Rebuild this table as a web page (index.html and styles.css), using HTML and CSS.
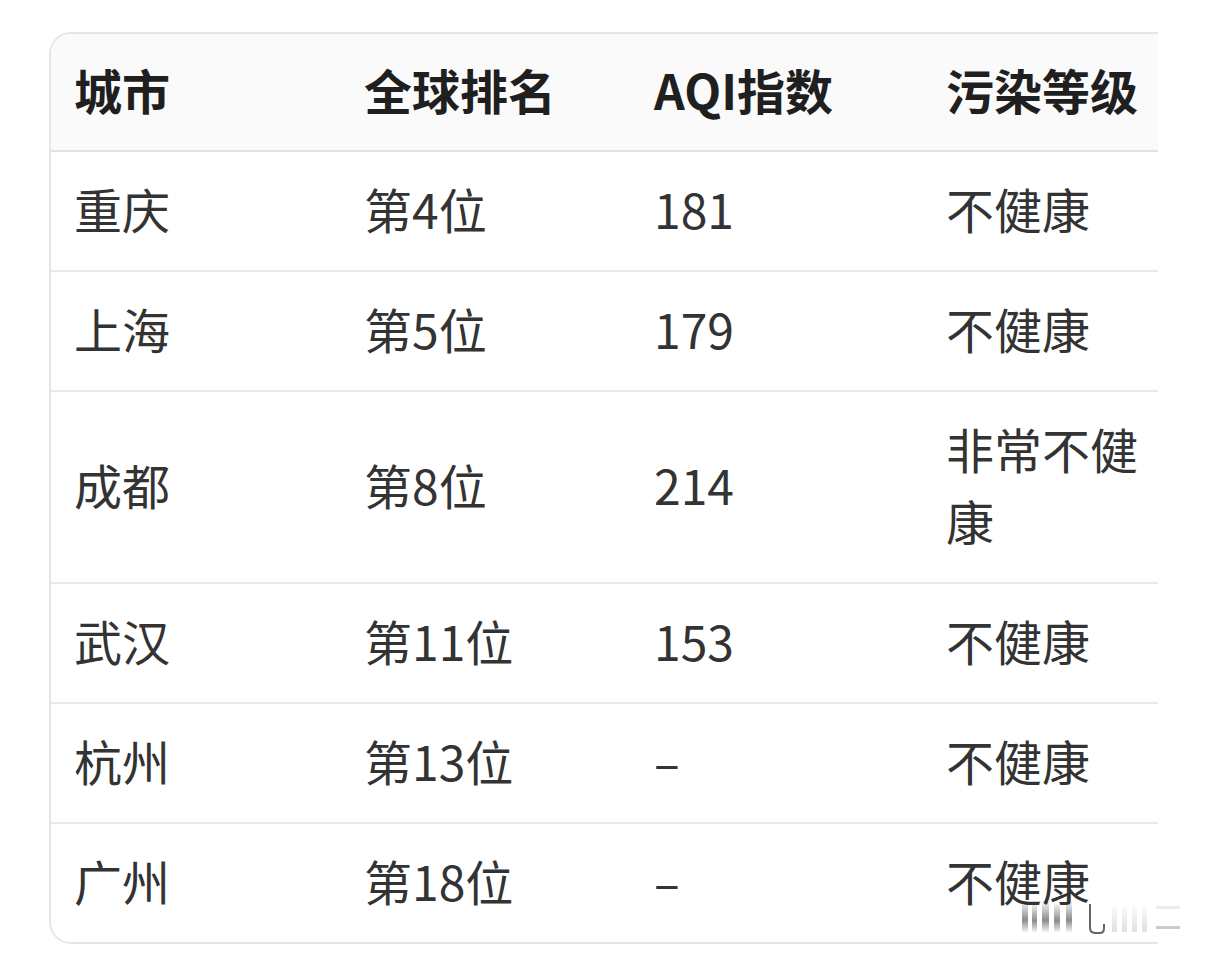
FILE: index.html
```html
<!DOCTYPE html>
<html lang="zh-CN">
<head>
<meta charset="utf-8">
<title>城市空气质量</title>
<link rel="stylesheet" href="styles.css">
</head>
<body>
<div class="page">
  <div class="clip">
    <div class="card">
      <table class="aqi">
        <colgroup>
          <col class="c1"><col class="c2"><col class="c3"><col class="c4">
        </colgroup>
        <thead>
          <tr><th>城市</th><th>全球排名</th><th>AQI指数</th><th>污染等级</th></tr>
        </thead>
        <tbody>
          <tr><td>重庆</td><td>第4位</td><td>181</td><td>不健康</td></tr>
          <tr><td>上海</td><td>第5位</td><td>179</td><td>不健康</td></tr>
          <tr><td>成都</td><td>第8位</td><td>214</td><td>非常不健康</td></tr>
          <tr><td>武汉</td><td>第11位</td><td>153</td><td>不健康</td></tr>
          <tr><td>杭州</td><td>第13位</td><td>–</td><td>不健康</td></tr>
          <tr class="last"><td>广州</td><td>第18位</td><td>–</td><td>不健康</td></tr>
        </tbody>
      </table>
    </div>
  </div>
  <svg class="mark" width="164" height="36" viewBox="0 0 164 36" aria-hidden="true">
    <defs>
      <linearGradient id="g1" x1="0" y1="0" x2="0" y2="1">
        <stop offset="0" stop-color="#000" stop-opacity="0.05"/>
        <stop offset="0.6" stop-color="#000" stop-opacity="0.45"/>
        <stop offset="1" stop-color="#000" stop-opacity="0.05"/>
      </linearGradient>
      <linearGradient id="g2" x1="0" y1="0" x2="0" y2="1">
        <stop offset="0" stop-color="#000" stop-opacity="0.02"/>
        <stop offset="1" stop-color="#000" stop-opacity="0.12"/>
      </linearGradient>
    </defs>
    <rect x="2" y="2" width="6" height="30" fill="url(#g1)"/>
    <rect x="12" y="4" width="5" height="28" fill="url(#g1)"/>
    <rect x="22" y="2" width="7" height="30" fill="url(#g1)"/>
    <rect x="34" y="4" width="6" height="28" fill="url(#g1)"/>
    <rect x="46" y="2" width="6" height="30" fill="url(#g1)"/>
    <path d="M70 4 V28 Q70 33 76 33 H80 Q84 33 84 28 V24" fill="none" stroke="#222" stroke-opacity="0.7" stroke-width="2"/>
    <rect x="92" y="6" width="5" height="26" fill="url(#g2)"/>
    <rect x="102" y="6" width="5" height="26" fill="url(#g2)"/>
    <rect x="112" y="6" width="5" height="26" fill="url(#g2)"/>
    <rect x="122" y="6" width="5" height="26" fill="url(#g2)"/>
    <rect x="136" y="6" width="24" height="3" fill="#000" fill-opacity="0.08"/>
    <rect x="136" y="26" width="24" height="3" fill="#000" fill-opacity="0.2"/>
  </svg>
</div>
</body>
</html>
```

FILE: styles.css
```css
html, body {
  margin: 0;
  padding: 0;
  background: #ffffff;
}

body {
  font-family: "Noto Sans CJK SC", "Noto Sans", sans-serif;
  color: #333333;
}

.page {
  position: relative;
  width: 1206px;
  height: 962px;
  padding: 32px 0 0 49px;
  box-sizing: border-box;
}

.clip {
  width: 1109px;
  overflow: hidden;
}

.card {
  width: 1145px;
  border: 2px solid #e6e6e6;
  border-radius: 22px;
  overflow: hidden;
  box-sizing: border-box;
}

.aqi {
  border-collapse: separate;
  border-spacing: 0;
  table-layout: fixed;
  width: 1141px;
  font-size: 48px;
  line-height: 72px;
}

.c1 { width: 290px; }
.c2 { width: 290px; }
.c3 { width: 292px; }
.c4 { width: 269px; }

.aqi th {
  background: #fafafa;
  color: #1f1f1f;
  font-weight: 700;
  text-align: left;
  padding: 19px 24px 25px 23px;
  border-bottom: 2px solid #e2e2e2;
  white-space: nowrap;
}

.aqi td {
  padding: 20px 24px 26px 23px;
  text-align: left;
  vertical-align: middle;
  border-bottom: 2px solid #e8e8e8;
  color: #333333;
  font-weight: 400;
}

.aqi tr.last td {
  border-bottom: none;
}

.mark {
  position: absolute;
  left: 1020px;
  top: 900px;
}
```
